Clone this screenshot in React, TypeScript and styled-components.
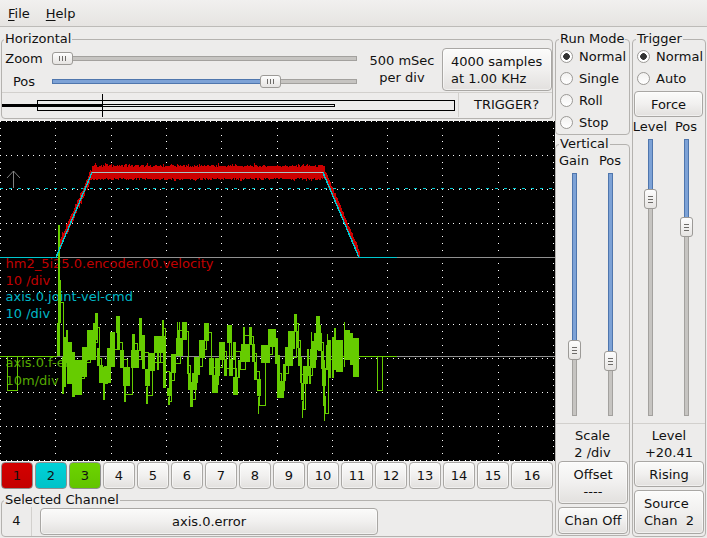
import React from 'react';
import styled, { createGlobalStyle, css } from 'styled-components';

const GlobalStyle = createGlobalStyle`
  html, body {
    margin: 0;
    padding: 0;
    background: #edeceb;
  }
  * {
    box-sizing: border-box;
  }
`;

const Window = styled.div`
  width: 707px;
  height: 538px;
  overflow: hidden;
  background: #edeceb;
  color: #111;
  font: 13px/15px 'DejaVu Sans', sans-serif;
`;

const MenuBar = styled.div`
  height: 27px;
  display: flex;
  gap: 16px;
  align-items: center;
  padding: 1px 0 0 8px;
  background: linear-gradient(#f1f0ef, #e6e4e2);
  border-bottom: 1px solid #bdbbb8;
`;

const MenuItem = styled.span`
  u {
    text-underline-offset: 2px;
  }
`;

const Body = styled.div`
  display: flex;
  padding-top: 5px;
`;

const LeftColumn = styled.div`
  width: 555px;
  display: flex;
  flex-direction: column;
`;

const RightColumn = styled.div`
  display: flex;
  flex-direction: column;
  width: 75px;
  margin-right: 2px;
`;

const TriggerColumn = styled.div`
  display: flex;
  flex-direction: column;
  width: 74px;
`;

const Group = styled.fieldset`
  margin: 0;
  padding: 0;
  min-width: 0;
  border: 1px solid #b4b2af;
  border-radius: 4px;
`;

const Legend = styled.legend`
  margin-left: 3px;
  padding: 0 1px;
  height: 14px;
  line-height: 14px;
`;

const HorizontalGroup = styled(Group)`
  width: 552px;
  margin-left: 1px;
  height: 87px;

  legend {
    margin-left: 2px;
  }
`;

const TopRow = styled.div`
  display: flex;
  height: 47px;
  border-bottom: 1px solid #d2d0cd;
`;

const SliderColumn = styled.div`
  width: 355px;
  padding-top: 6px;
  display: flex;
  flex-direction: column;
  gap: 10px;
`;

const SliderRow = styled.div`
  display: flex;
  align-items: center;
  height: 13px;
`;

const SliderLabel = styled.span`
  width: 44px;
  margin-right: 6px;
  text-align: center;
`;

const TimeLabel = styled.div`
  width: 82px;
  margin-left: 3px;
  padding: 6px 0 0 2px;
  line-height: 17px;
  text-align: center;
`;

const buttonFace = css`
  border: 1px solid #a9a7a4;
  border-radius: 4px;
  background: linear-gradient(#fbfbfa, #f1f0ef 50%, #e2e0de);
  box-shadow: inset 0 0 0 1px rgba(255, 255, 255, 0.5);
  font: inherit;
  color: #111;
  padding: 0;
`;

const SamplesButton = styled.button`
  ${buttonFace}
  width: 110px;
  height: 43px;
  margin-top: 2px;
  padding-left: 8px;
  line-height: 17px;
  text-align: left;
`;

const BottomRow = styled.div`
  display: flex;
  height: 24px;
`;

const RecordBar = styled.svg`
  display: block;
  flex: none;
  width: 456px;
  height: 24px;
`;

const TriggerStatus = styled.div`
  flex: 1;
  padding-left: 2px;
  border-left: 1px solid #d2d0cd;
  text-align: center;
  line-height: 24px;
`;

const Scope = styled.div`
  margin-top: 2px;
  width: 555px;
  height: 340px;
  background: #000;

  svg {
    display: block;
  }
`;

const ChannelRow = styled.div`
  display: grid;
  grid-template-columns: repeat(15, 32px) 42px;
  gap: 2px;
  height: 27px;
  margin: 1px 0 4px 1px;
`;

const channelColours: Record<string, string> = {
  red: 'linear-gradient(#d40000, #c40000)',
  cyan: 'linear-gradient(#00d2d8, #00c2c8)',
  green: 'linear-gradient(#6cd400, #62c400)',
};

const ChannelButton = styled.button<{ $colour?: string }>`
  ${buttonFace}
  ${p => p.$colour && css`
    background: ${channelColours[p.$colour]};
    border-color: #8f8f8f;
    box-shadow: none;
  `}
`;

const SelectedGroup = styled(Group)`
  width: 552px;
  margin-left: 1px;
  height: 44px;

  legend {
    margin-left: 2px;
  }
`;

const SelectedRow = styled.div`
  display: flex;
  align-items: center;
  height: 29px;
`;

const ChannelNumber = styled.div`
  width: 30px;
  height: 29px;
  line-height: 27px;
  text-align: center;
  border-right: 1px solid #d2d0cd;
`;

const ChannelName = styled.button`
  ${buttonFace}
  width: 338px;
  height: 27px;
  margin-left: 8px;
`;

const RadioList = styled.div`
  margin-top: -1px;
`;

const RadioRow = styled.label`
  display: flex;
  align-items: center;
  height: 22px;
  padding-left: 4px;
  gap: 6px;
  white-space: nowrap;
`;

const RadioDot = styled.span<{ $checked?: boolean }>`
  width: 13px;
  height: 13px;
  border-radius: 50%;
  border: 1px solid #9b9996;
  background: ${p =>
    p.$checked
      ? 'radial-gradient(circle, #333 0 3px, #fff 3.6px)'
      : 'linear-gradient(#f2f1f0, #fff)'};
`;

const RunGroup = styled(Group)`
  height: 103px;
`;

const VerticalGroup = styled(Group)`
  margin-top: 2px;
  height: 399px;
`;

const TriggerGroup = styled(Group)`
  height: 505px;
`;

const SliderHeads = styled.div<{ $top?: number; $shift?: number }>`
  display: grid;
  grid-template-columns: 36px 36px;
  text-align: center;
  height: 14px;
  line-height: 14px;
  margin: ${p => p.$top || 0}px 0 0 ${p => p.$shift || 0}px;
`;

const SliderBay = styled.div<{ $height: number; $shift?: number }>`
  display: grid;
  grid-template-columns: 13px 13px;
  column-gap: 23px;
  height: ${p => p.$height}px;
  margin: 5px 0 7px ${p => p.$shift || 0}px;
  padding-left: 12px;
`;

const ReadoutBlock = styled.div`
  border-top: 1px solid #d2d0cd;
  padding-top: 3px;
  height: 38px;
  line-height: 17px;
  text-align: center;
`;

const ButtonStack = styled.div<{ $inset: number }>`
  display: flex;
  flex-direction: column;
  gap: 3px;
  padding: 0 1px 0 ${p => p.$inset}px;
`;

const SideButton = styled.button<{ $height: number; $left?: boolean }>`
  ${buttonFace}
  width: 100%;
  height: ${p => p.$height}px;
  line-height: 17px;
  white-space: pre;
  ${p => p.$left && css`
    text-align: left;
    padding-left: 9px;
  `}
`;

const ForceButton = styled(SideButton)`
  display: block;
  width: 69px;
  margin: 2px 0 3px 1px;
`;

const SliderBox = styled.div<{ $vertical?: boolean }>`
  position: relative;
  ${p =>
    p.$vertical
      ? css`width: 13px; height: 100%;`
      : css`width: 305px; height: 13px;`}
`;

const Track = styled.div<{ $vertical?: boolean }>`
  position: absolute;
  background: #c6c4c1;
  border: 1px solid #a3a19e;
  ${p =>
    p.$vertical
      ? css`left: 4px; top: 0; bottom: 0; width: 5px;`
      : css`top: 4px; left: 0; right: 0; height: 5px;`}
`;

const TrackFill = styled.div<{ $vertical?: boolean }>`
  position: absolute;
  background: #7da2d6;
  border: 1px solid #4f76ad;
  ${p =>
    p.$vertical
      ? css`left: 4px; top: 0; width: 5px;`
      : css`top: 4px; left: 0; height: 5px;`}
`;

const Thumb = styled.div<{ $vertical?: boolean }>`
  position: absolute;
  display: flex;
  align-items: center;
  justify-content: center;
  border: 1px solid #9c9a97;
  border-radius: 3px;
  background: linear-gradient(#fdfdfd, #e6e4e2);
  ${p =>
    p.$vertical
      ? css`
          left: 0;
          width: 13px;
          height: 20px;
          flex-direction: column;
          gap: 2px;
          i { width: 5px; height: 1px; background: #6d6b68; }
        `
      : css`
          top: 0;
          width: 21px;
          height: 13px;
          gap: 2px;
          i { width: 1px; height: 5px; background: #6d6b68; }
        `}
`;

const Slider: React.FC<{ at: number; size: number; vertical?: boolean }> = ({ at, size, vertical }) => {
  const thumb = vertical ? 20 : 21;
  const offset = Math.round((size - thumb) * at);
  const fill = offset + 2;
  return (
    <SliderBox $vertical={vertical}>
      <Track $vertical={vertical} />
      {at > 0 && (
        <TrackFill $vertical={vertical} style={vertical ? { height: fill } : { width: fill }} />
      )}
      <Thumb $vertical={vertical} style={vertical ? { top: offset } : { left: offset }}>
        <i /><i /><i />
      </Thumb>
    </SliderBox>
  );
};

const SCOPE_W = 555;
const SCOPE_H = 340;
const RED = '#cc0000';
const CYAN = '#00c8d0';
const GREEN = '#66cc00';

const rnd = (i: number) => {
  const v = Math.sin(i * 12.9898) * 43758.5453;
  return v - Math.floor(v);
};

// grid dots, scope coords
const gridDots = () => {
  const dots: React.ReactElement[] = [];
  for (let k = 0; k <= 10; k++) {
    const y = Math.round(k * 33.9);
    for (let x = 0; x < SCOPE_W; x += 5.53) {
      dots.push(<rect key={`h${k}-${x}`} x={Math.round(x)} y={y} width={1} height={1} fill="#fff" />);
    }
    const vx = Math.round(k * 55.3);
    for (let j = 0; j < 50; j++) {
      dots.push(<rect key={`v${k}-${j}`} x={vx} y={Math.round(j * 6.78)} width={1} height={1} fill="#fff" />);
    }
  }
  return dots;
};

const redTrace = () => {
  const bars: React.ReactElement[] = [];
  const add = (x: number, top: number, bottom: number) =>
    bars.push(
      <rect key={x} x={x} y={Math.round(top - 121)} width={1} height={Math.round(bottom - top)} fill={RED} />,
    );
  for (let x = 60; x < 92; x++) {
    const c = 243 + ((x - 60) / 32) * (172 - 243);
    add(x, c - 3 - rnd(x) * 4, c + 3 + rnd(x + 99) * 4);
  }
  for (let x = 92; x < 325; x++) {
    const spike = rnd(x * 3) > 0.85 ? 2 : 0;
    add(x, 167 - rnd(x) * 2 - spike, 178 + rnd(x + 500) * 2 + (rnd(x * 7) > 0.85 ? 1 : 0));
  }
  for (let x = 325; x < 360; x++) {
    const c = 176 + ((x - 325) / 35) * (257 - 176);
    add(x, c - 3 - rnd(x) * 3, c + 2 + rnd(x + 99) * 3);
  }
  return bars;
};

// [x1, x2, y1, y2] read off 3x crops of the trace
const greenLeft = [
  [170, 173, 130, 230], [175, 177, 0, 130], [181, 183, 0, 130], [185, 192, 230, 340], [190, 200, 170, 320], [198, 204, 150, 250],
  [200, 215, 185, 310], [215, 225, 215, 350], [225, 245, 240, 345], [245, 260, 200, 290],
  [260, 280, 150, 240], [278, 286, 130, 240], [285, 295, 100, 180], [292, 300, 205, 260], [297, 310, 255, 310],
  [310, 315, 260, 360], [312, 332, 258, 310], [322, 330, 205, 260], [330, 345, 155, 260],
  [348, 360, 108, 160], [352, 360, 160, 210], [360, 372, 210, 265], [370, 392, 260, 318],
  [372, 378, 318, 365], [392, 402, 210, 265], [396, 405, 162, 215], [402, 418, 210, 265],
  [417, 426, 115, 215], [427, 437, 165, 268], [436, 450, 268, 320], [438, 444, 320, 370],
  [448, 465, 218, 272], [462, 497, 168, 220], [470, 476, 220, 270], [487, 492, 120, 170],
  [490, 500, 220, 325], [500, 512, 325, 350], [504, 510, 350, 375], [510, 515, 275, 325],
  [514, 530, 222, 278], [528, 550, 175, 228], [532, 535, 125, 175], [538, 541, 125, 175],
  [546, 560, 125, 178], [562, 568, 230, 280], [564, 574, 280, 330], [570, 578, 330, 382],
  [576, 592, 280, 332], [582, 600, 230, 285], [598, 615, 180, 235], [612, 626, 128, 182],
  [626, 640, 235, 285], [636, 654, 285, 338], [645, 660, 235, 288], [658, 675, 185, 238],
  [672, 682, 238, 290], [680, 695, 135, 188], [686, 697, 238, 290], [700, 714, 290, 345],
  [700, 710, 185, 240], [715, 722, 240, 295], [722, 750, 192, 245], [730, 736, 140, 192],
  [748, 758, 140, 195], [755, 765, 192, 245], [762, 772, 245, 298], [770, 783, 298, 350],
  [774, 777, 350, 400], [782, 808, 195, 250], [803, 828, 148, 200], [826, 835, 200, 250],
  [832, 840, 250, 305],
];

const greenRight = [
  [0, 18, 117, 170], [15, 22, 170, 222], [22, 28, 222, 274], [22, 42, 274, 326], [38, 47, 222, 274],
  [45, 63, 170, 228], [54, 75, 122, 176], [60, 70, 176, 228], [72, 82, 72, 125], [78, 87, 124, 176],
  [85, 93, 175, 228], [90, 97, 226, 280], [93, 102, 280, 332], [96, 99, 332, 384], [99, 113, 228, 282],
  [111, 118, 176, 230], [116, 123, 228, 282], [123, 126, 125, 178], [120, 138, 178, 234],
  [132, 144, 130, 182], [138, 150, 78, 130], [144, 156, 130, 184], [153, 162, 182, 235],
  [156, 168, 235, 288], [159, 166, 288, 348], [162, 165, 348, 392], [168, 180, 165, 240],
  [171, 174, 132, 165], [178, 184, 150, 265], [185, 192, 140, 262], [192, 198, 115, 240],
  [198, 220, 150, 245], [222, 225, 95, 230], [226, 240, 120, 210], [240, 250, 130, 225], [250, 268, 145, 262],
];

const greenBars = (rows: number[][], ox: number, oy: number, id: string) =>
  rows.map(([x1, x2, y1, y2], i) => (
    <rect
      key={id + i}
      x={Math.round(ox + x1 / 3)}
      y={Math.round(oy + y1 / 3 - 121)}
      width={Math.max(1, Math.round((x2 - x1) / 3))}
      height={Math.round((y2 - y1) / 3)}
      fill={GREEN}
    />
  ));

// the signal steps from bar to bar, so join their middles
const greenJoin = (rows: number[][], ox: number, oy: number) =>
  rows
    .map(([x1, x2, y1, y2], i) => {
      const x = Math.round(ox + (x1 + x2) / 6) + 0.5;
      const y = Math.round(oy + (y1 + y2) / 6 - 121) + 0.5;
      return `${i ? 'H' + x + 'V' + y : 'M' + x + ' ' + y}`;
    })
    .join('');

const ScopeTrace: React.FC = () => (
  <svg width={SCOPE_W} height={SCOPE_H} shapeRendering="crispEdges">
    {gridDots()}
    <rect x={0} y={136} width={SCOPE_W} height={1} fill="#909090" />
    <rect x={0} y={235} width={SCOPE_W} height={1} fill="#909090" />
    <line x1={0} x2={SCOPE_W} y1={67.5} y2={67.5} stroke={CYAN} strokeDasharray="3 6" />
    <g fontFamily="'DejaVu Sans', sans-serif" fontSize={13} shapeRendering="auto">
      <text x={5.5} y={147} fill="#c00000">hm2_5i25.0.encoder.00.velocity</text>
      <text x={5.5} y={164} fill="#c00000">10 /div</text>
      <text x={5.5} y={180} fill="#00b8c8">axis.0.joint-vel-cmd</text>
      <text x={5.5} y={197} fill="#00b8c8">10 /div</text>
      <text x={5.5} y={246} fill="#55aa00">axis.0.f-error</text>
      <text x={5.5} y={264} fill="#55aa00">10m/div</text>
    </g>
    <path d="M13.5 67V50M13.5 50L7 57M13.5 50L20 57" stroke="#808080" fill="none" shapeRendering="auto" />
    {redTrace()}
    <rect x={0} y={235} width={57} height={1} fill={GREEN} />
    <rect x={7} y={235} width={1} height={35} fill={GREEN} />
    <rect x={7} y={269} width={11} height={1} fill={GREEN} />
    <rect x={17} y={235} width={1} height={35} fill={GREEN} />
    <rect x={58} y={104} width={2} height={131} fill={GREEN} />
    <rect x={359} y={235} width={38} height={1} fill={GREEN} />
    <rect x={377} y={235} width={1} height={35} fill={GREEN} />
    <rect x={377} y={269} width={6} height={1} fill={GREEN} />
    <rect x={382} y={235} width={1} height={35} fill={GREEN} />
    {greenBars(greenLeft, 0, 280, 'l')}
    {greenBars(greenRight, 270, 290, 'r')}
    <path d={greenJoin(greenLeft, 0, 280)} stroke={GREEN} fill="none" />
    <path d={greenJoin(greenRight, 270, 290)} stroke={GREEN} fill="none" />
    <path d="M0 136.5H56L92 51.5H323L359 136.5H397" stroke={CYAN} strokeWidth={1.4} fill="none" />
    <rect x={92} y={51} width={231} height={1} fill="#a8c4c4" />
  </svg>
);

const channels = Array.from({ length: 16 }, (_, i) => i + 1);
const colourOf: Record<number, string> = { 1: 'red', 2: 'cyan', 3: 'green' };

const App: React.FC = () => (
  <Window>
    <GlobalStyle />
    <MenuBar>
      <MenuItem><u>F</u>ile</MenuItem>
      <MenuItem><u>H</u>elp</MenuItem>
    </MenuBar>
    <Body>
      <LeftColumn>
        <HorizontalGroup>
          <Legend>Horizontal</Legend>
          <TopRow>
            <SliderColumn>
              <SliderRow>
                <SliderLabel>Zoom</SliderLabel>
                <Slider at={0} size={305} />
              </SliderRow>
              <SliderRow>
                <SliderLabel>Pos</SliderLabel>
                <Slider at={0.732} size={305} />
              </SliderRow>
            </SliderColumn>
            <TimeLabel>500 mSec<br />per div</TimeLabel>
            <SamplesButton>4000 samples<br />at 1.00 KHz</SamplesButton>
          </TopRow>
          <BottomRow>
            <RecordBar viewBox="0 0 456 24" shapeRendering="crispEdges">
              <rect x={0} y={11} width={100} height={3} fill="#000" />
              <rect x={35.5} y={7.5} width={417} height={10} fill="none" stroke="#000" />
              <rect x={100.5} y={11.5} width={232} height={2} fill="none" stroke="#000" />
              <line x1={100.5} x2={100.5} y1={1} y2={24} stroke="#000" />
            </RecordBar>
            <TriggerStatus>TRIGGER?</TriggerStatus>
          </BottomRow>
        </HorizontalGroup>
        <Scope>
          <ScopeTrace />
        </Scope>
        <ChannelRow>
          {channels.map(n => (
            <ChannelButton key={n} $colour={colourOf[n]}>{n}</ChannelButton>
          ))}
        </ChannelRow>
        <SelectedGroup>
          <Legend>Selected Channel</Legend>
          <SelectedRow>
            <ChannelNumber>4</ChannelNumber>
            <ChannelName>axis.0.error</ChannelName>
          </SelectedRow>
        </SelectedGroup>
      </LeftColumn>

      <RightColumn>
        <RunGroup>
          <Legend>Run Mode</Legend>
          <RadioList>
            <RadioRow><RadioDot $checked />Normal</RadioRow>
            <RadioRow><RadioDot />Single</RadioRow>
            <RadioRow><RadioDot />Roll</RadioRow>
            <RadioRow><RadioDot />Stop</RadioRow>
          </RadioList>
        </RunGroup>
        <VerticalGroup>
          <Legend>Vertical</Legend>
          <SliderHeads $top={3}>
            <span>Gain</span>
            <span>Pos</span>
          </SliderHeads>
          <SliderBay $height={243}>
            <Slider at={0.75} size={243} vertical />
            <Slider at={0.8} size={243} vertical />
          </SliderBay>
          <ReadoutBlock>Scale<br />2 /div</ReadoutBlock>
          <ButtonStack $inset={2}>
            <SideButton $height={43}>Offset{'\n'}----</SideButton>
            <SideButton $height={27}>Chan Off</SideButton>
          </ButtonStack>
        </VerticalGroup>
      </RightColumn>

      <TriggerColumn>
        <TriggerGroup>
          <Legend>Trigger</Legend>
          <RadioList>
            <RadioRow><RadioDot $checked />Normal</RadioRow>
            <RadioRow><RadioDot />Auto</RadioRow>
          </RadioList>
          <ForceButton $height={26}>Force</ForceButton>
          <SliderHeads $shift={-1}>
            <span>Level</span>
            <span>Pos</span>
          </SliderHeads>
          <SliderBay $height={277} $shift={-1}>
            <Slider at={0.195} size={277} vertical />
            <Slider at={0.304} size={277} vertical />
          </SliderBay>
          <ReadoutBlock>Level<br />+20.41</ReadoutBlock>
          <ButtonStack $inset={1}>
            <SideButton $height={26}>Rising</SideButton>
            <SideButton $height={44} $left>Source{'\n'}Chan  2</SideButton>
          </ButtonStack>
        </TriggerGroup>
      </TriggerColumn>
    </Body>
  </Window>
);

export default App;
